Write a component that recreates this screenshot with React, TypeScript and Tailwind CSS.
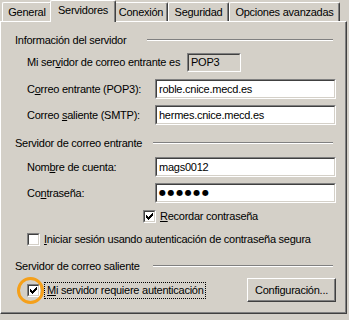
import React from "react";

function CheckMark() {
  return (
    <svg width="7" height="7" viewBox="0 0 7 7" shapeRendering="crispEdges" className="absolute left-[1px] top-[1px]">
      <g fill="#000">
        <rect x="6" y="0" width="1" height="1" />
        <rect x="5" y="1" width="2" height="1" />
        <rect x="0" y="2" width="1" height="1" />
        <rect x="4" y="2" width="3" height="1" />
        <rect x="0" y="3" width="2" height="1" />
        <rect x="3" y="3" width="3" height="1" />
        <rect x="0" y="4" width="5" height="1" />
        <rect x="1" y="5" width="3" height="1" />
        <rect x="2" y="6" width="1" height="1" />
      </g>
    </svg>
  );
}

function Check({ checked }: { checked?: boolean }) {
  return (
    <span className="block w-[13px] h-[13px] shrink-0 border border-t-[#808080] border-l-[#808080] border-b-white border-r-white">
      <span className="relative block w-full h-full border border-t-[#404040] border-l-[#404040] border-b-[#d4d0c8] border-r-[#d4d0c8] bg-white">
        {checked && <CheckMark />}
      </span>
    </span>
  );
}

function Sunken({ children, className, inner }: { children: React.ReactNode; className: string; inner: string }) {
  return (
    <div className={"border border-t-[#808080] border-l-[#808080] border-b-white border-r-white " + className}>
      <div className={"h-full border border-t-[#404040] border-l-[#404040] border-b-[#d4d0c8] border-r-[#d4d0c8] flex items-center pl-[2px] " + inner}>
        {children}
      </div>
    </div>
  );
}

function Header({ text, w, className }: { text: string; w: string; className: string }) {
  return (
    <div className={"flex items-center h-[14px] " + className}>
      <span className={"shrink-0 whitespace-nowrap " + w}>{text}</span>
      <div className="flex-1 h-[2px] border-t border-t-[#808080] border-b border-b-white mr-[3px]" />
    </div>
  );
}

function U({ children }: { children: React.ReactNode }) {
  return <span className="underline decoration-1 underline-offset-[1px]">{children}</span>;
}

function FieldRow({ label, value, className }: { label: React.ReactNode; value: React.ReactNode; className: string }) {
  return (
    <div className={"flex items-center h-[20px] pl-[12px] " + className}>
      <span className="w-[128px] shrink-0 whitespace-nowrap">{label}</span>
      <Sunken className="flex-1 h-[20px]" inner="bg-white">
        {value}
      </Sunken>
    </div>
  );
}

type TabProps = { label: string; w: string; selected?: boolean };

function Tab({ label, w, selected }: TabProps) {
  if (selected) {
    return (
      <div
        className={
          "relative z-10 -mx-[2px] -mb-[1px] h-[22px] bg-[#d4d0c8] border-l border-t border-l-white border-t-white border-r border-r-[#404040] shadow-[inset_-1px_0_0_#808080] rounded-tl-[2px] rounded-tr-[2px] flex items-start justify-center pt-[3px] " +
          w
        }
      >
        {label}
      </div>
    );
  }
  return (
    <div
      className={
        "h-[19px] bg-[#d4d0c8] border-l border-t border-l-white border-t-white border-r border-r-[#404040] shadow-[inset_-1px_0_0_#808080] rounded-tl-[2px] rounded-tr-[2px] flex items-start justify-center pt-[3px] " +
        w
      }
    >
      {label}
    </div>
  );
}

export default function App() {
  return (
    <div
      className="relative w-[349px] h-[320px] overflow-hidden bg-[#d4d0c8] text-black text-[11px] leading-[13px] tracking-[-0.25px]"
      style={{ fontFamily: '"Liberation Sans", Arial, sans-serif' }}
    >
      {/* Tabs */}
      <div className="flex items-end h-[21px] pl-[2px]">
        <Tab label="General" w="w-[50px]" />
        <Tab label="Servidores" w="w-[66px]" selected />
        <Tab label="Conexión" w="w-[54px]" />
        <Tab label="Seguridad" w="w-[61px]" />
        <Tab label="Opciones avanzadas" w="w-[111px]" />
      </div>

      {/* Panel */}
      <div className="w-[347px] h-[293px] border-t border-l border-t-white border-l-white border-r border-b border-r-[#404040] border-b-[#404040] shadow-[inset_-1px_-1px_0_#808080] pl-[14px] pr-[10px] pt-[11px] flex flex-col">
        <Header text="Información del servidor" w="w-[132px]" className="" />

        <div className="flex items-center h-[19px] pl-[12px] mt-[6px]">
          <span className="w-[160px] shrink-0 whitespace-nowrap">
            Mi ser<U>v</U>idor de correo entrante es
          </span>
          <Sunken className="w-[54px] h-[19px]" inner="bg-[#d4d0c8]">
            POP3
          </Sunken>
        </div>

        <FieldRow
          className="mt-[7px]"
          label={
            <>
              C<U>o</U>rreo entrante (POP3):
            </>
          }
          value="roble.cnice.mecd.es"
        />
        <FieldRow
          className="mt-[6px]"
          label={
            <>
              Correo <U>s</U>aliente (SMTP):
            </>
          }
          value="hermes.cnice.mecd.es"
        />

        <Header text="Servidor de correo entrante" w="w-[138px]" className="mt-[11px]" />

        <FieldRow
          className="mt-[7px]"
          label={
            <>
              Nom<U>b</U>re de cuenta:
            </>
          }
          value="mags0012"
        />
        <FieldRow
          className="mt-[6px]"
          label={
            <>
              Co<U>n</U>traseña:
            </>
          }
          value={
            <span className="text-[8px] tracking-[1.6px] leading-[10px]" style={{ fontFamily: '"DejaVu Sans", sans-serif' }}>
              ●●●●●●
            </span>
          }
        />

        <div className="flex items-center h-[14px] pl-[128px] mt-[6px]">
          <Check checked />
          <span className="ml-[4px] whitespace-nowrap">
            <U>R</U>ecordar contraseña
          </span>
        </div>

        <div className="flex items-center h-[14px] pl-[12px] mt-[9px]">
          <Check />
          <span className="ml-[4px] whitespace-nowrap">
            <U>I</U>niciar sesión usando autenticación de contraseña segura
          </span>
        </div>

        <Header text="Servidor de correo saliente" w="w-[138px]" className="mt-[13px]" />

        <div className="flex items-center h-[24px] pl-[12px] mt-[5px]">
          <Check checked />
          <span className="ml-[4px] h-[17px] flex items-center border border-dotted border-black pl-[2px] pr-[1px] whitespace-nowrap">
            <U>M</U>i servidor requiere autenticación
          </span>
          <div className="ml-auto w-[89px] h-[24px] border border-t-white border-l-white border-b-[#404040] border-r-[#404040] shadow-[inset_-1px_-1px_0_#808080] flex items-center justify-center whitespace-nowrap">
            Confi<U>g</U>uración...
          </div>
        </div>
      </div>

      {/* Annotation circle */}
      <div className="absolute left-[17px] top-[277px] w-[27px] h-[27px] rounded-full border-[3px] border-[#f5a01a] pointer-events-none" />
    </div>
  );
}
